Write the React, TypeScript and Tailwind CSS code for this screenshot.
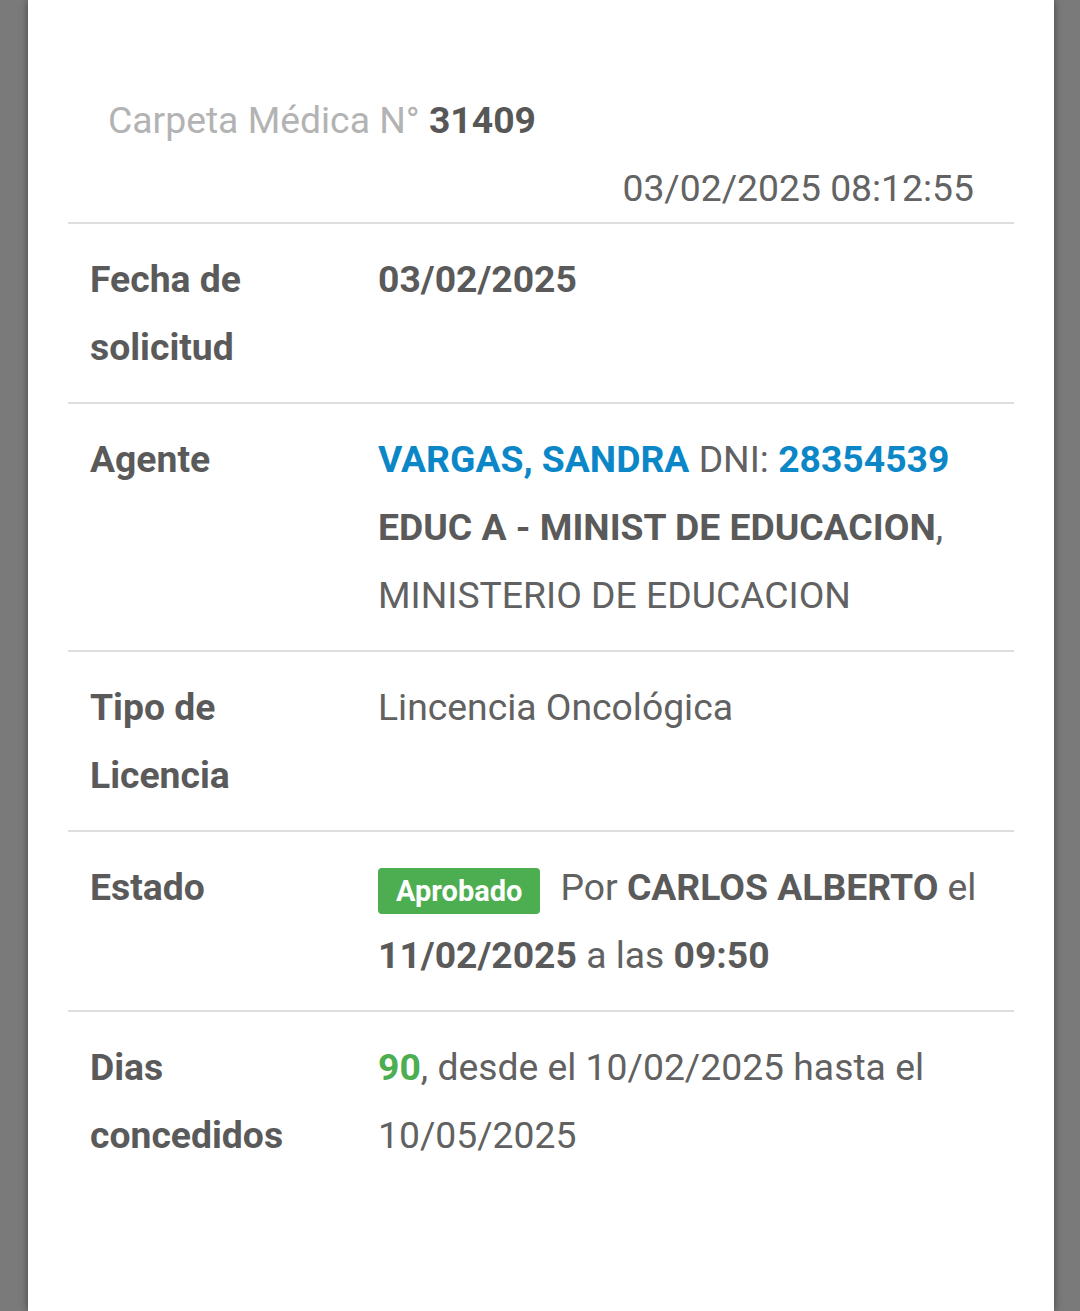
import React from "react";

const Row = ({ label, children }: { label: React.ReactNode; children: React.ReactNode }) => (
  <div className="grid grid-cols-[288px_1fr] border-t-2 border-[#dedede] py-[21px]">
    <div className="px-[22px] font-bold text-[#5a5a5a]">{label}</div>
    <div className="px-[22px] text-[#616161]">{children}</div>
  </div>
);

export default function App() {
  return (
    <div
      className="flex min-h-[1311px] w-[1080px] justify-center bg-[#7a7a7a] pl-[28px] pr-[26px]"
      style={{ fontFamily: "Roboto, 'Liberation Sans', sans-serif" }}
    >
      <div className="w-full bg-white px-[40px] pt-[86px] text-[37.3px] leading-[68px] shadow-[0_0_8px_rgba(0,0,0,0.45)]">
        <div className="px-[40px] text-[#b3b3b3]">
          Carpeta Médica N° <span className="font-bold text-[#575757]">31409</span>
        </div>
        <div className="px-[40px] text-right text-[#636363]">03/02/2025 08:12:55</div>
        <div>
          <Row label="Fecha de solicitud">
            <span className="font-bold text-[#5a5a5a]">03/02/2025</span>
          </Row>
          <Row label="Agente">
            <span className="font-bold text-[#0b87c8]">VARGAS, SANDRA</span> DNI:{" "}
            <span className="font-bold text-[#0b87c8]">28354539</span>
            <br />
            <span className="font-bold text-[#5a5a5a]">EDUC A - MINIST DE EDUCACION</span>, MINISTERIO DE EDUCACION
          </Row>
          <Row label="Tipo de Licencia">Lincencia Oncológica</Row>
          <Row label="Estado">
            <span className="mr-[20px] mt-[15px] inline-block rounded-[4px] bg-[#4cae50] px-[18px] align-top text-[29px] font-bold leading-[46px] text-white">
              Aprobado
            </span>
            <span className="align-top">
              Por <span className="font-bold text-[#5a5a5a]">CARLOS ALBERTO</span> el{" "}
              <span className="font-bold text-[#5a5a5a]">11/02/2025</span> a las{" "}
              <span className="font-bold text-[#5a5a5a]">09:50</span>
            </span>
          </Row>
          <Row label="Dias concedidos">
            <span className="font-bold text-[#4cae50]">90</span>, desde el 10/02/2025 hasta el 10/05/2025
          </Row>
        </div>
      </div>
    </div>
  );
}
